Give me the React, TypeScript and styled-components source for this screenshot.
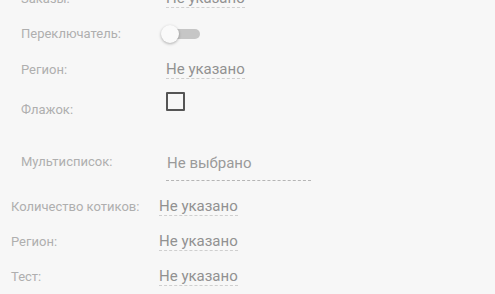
import styled, { createGlobalStyle } from 'styled-components';

const Global = createGlobalStyle`
  html, body {
    margin: 0;
    padding: 0;
    background: #f7f7f7;
    font-family: Roboto, "Liberation Sans", sans-serif;
    overflow: hidden;
  }
`;

const Form = styled.div`
  margin-top: -11px;
  display: flex;
  flex-direction: column;
`;

const Group = styled.section<{ $indent: number; $gap: number }>`
  display: flex;
  flex-direction: column;
  padding-left: ${p => p.$indent}px;
  gap: ${p => p.$gap}px;
`;

const Row = styled.div<{ $align?: string; $top?: number; $height?: number }>`
  display: flex;
  align-items: ${p => p.$align || 'baseline'};
  margin-top: ${p => p.$top || 0}px;
  ${p => (p.$height ? `height: ${p.$height}px;` : '')}
`;

const Label = styled.span<{ $width: number; $self?: string; $pad?: number }>`
  width: ${p => p.$width}px;
  flex-shrink: 0;
  font-size: 13px;
  line-height: 14px;
  color: #afafaf;
  ${p => (p.$self ? `align-self: ${p.$self};` : '')}
  padding-top: ${p => p.$pad || 0}px;
`;

const Value = styled.span`
  font-size: 15px;
  line-height: 18px;
  color: #919191;
  border-bottom: 1px dashed #cfcfcf;
`;

const MultiValue = styled.div`
  width: 144px;
  padding-left: 1px;
  padding-bottom: 8px;
  font-size: 15px;
  line-height: 18px;
  color: #9a9a9a;
  border-bottom: 1px dashed #b5b5b5;
`;

const Switch = styled.div`
  position: relative;
  width: 39px;
  height: 20px;
  margin-left: -5px;
`;

const Track = styled.div`
  position: absolute;
  left: 5px;
  top: 5px;
  width: 34px;
  height: 10px;
  border-radius: 5px;
  background: #c6c6c6;
`;

const Thumb = styled.div`
  position: absolute;
  left: 0;
  top: 1px;
  width: 18px;
  height: 18px;
  border-radius: 50%;
  background: #fafafa;
  box-shadow: 0 1px 3px rgba(0, 0, 0, 0.3);
`;

const Checkbox = styled.div`
  width: 19px;
  height: 19px;
  box-sizing: border-box;
  border: 2px solid #555;
  border-radius: 1px;
`;

const App = () => {
  return (
    <>
      <Global />
      <Form>
        <Group $indent={21} $gap={0}>
          <Row>
            <Label $width={145}>Заказы:</Label>
            <Value>Не указано</Value>
          </Row>
          <Row $align='center' $top={16} $height={20}>
            <Label $width={145}>Переключатель:</Label>
            <Switch>
              <Track />
              <Thumb />
            </Switch>
          </Row>
          <Row $top={16}>
            <Label $width={145}>Регион:</Label>
            <Value>Не указано</Value>
          </Row>
          <Row $align='flex-start' $top={13} $height={25}>
            <Label $width={145} $self='flex-end'>Флажок:</Label>
            <Checkbox />
          </Row>
          <Row $align='flex-start' $top={37}>
            <Label $width={145} $pad={1}>Мультисписок:</Label>
            <MultiValue>Не выбрано</MultiValue>
          </Row>
        </Group>
        <Group $indent={11} $gap={16} style={{ marginTop: 16 }}>
          <Row>
            <Label $width={148}>Количество котиков:</Label>
            <Value>Не указано</Value>
          </Row>
          <Row>
            <Label $width={148}>Регион:</Label>
            <Value>Не указано</Value>
          </Row>
          <Row>
            <Label $width={148}>Тест:</Label>
            <Value>Не указано</Value>
          </Row>
        </Group>
      </Form>
    </>
  );
};

export default App;
